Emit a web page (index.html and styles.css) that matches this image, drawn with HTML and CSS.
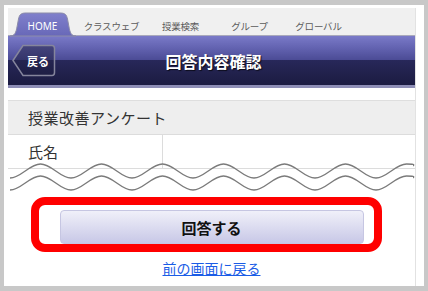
FILE: index.html
```html
<!DOCTYPE html>
<html lang="ja">
<head>
<meta charset="utf-8">
<title>回答内容確認</title>
<link rel="stylesheet" href="styles.css">
</head>
<body>
<div class="frame">
  <div class="content">
    <nav class="tabbar">
      <div class="tab tab-home">
        <svg class="tab-shape" width="66" height="25" viewBox="0 0 66 25">
          <defs>
            <linearGradient id="tg" x1="0" y1="0" x2="0" y2="1">
              <stop offset="0" stop-color="#8080cc"/>
              <stop offset="1" stop-color="#6868b8"/>
            </linearGradient>
          </defs>
          <path d="M0 24 C5 24 6 20 7 15 L8.5 7 C9.5 2.5 11 1 16 1 L50 1 C55 1 56.5 2.5 57.5 7 L59 15 C60 20 61 24 66 24 Z" fill="url(#tg)" stroke="#8c8ca8" stroke-width="1"/>
        </svg>
        <span class="tab-label">HOME</span>
      </div>
      <div class="tab"><span class="tab-label">クラスウェブ</span></div>
      <div class="tab"><span class="tab-label">授業検索</span></div>
      <div class="tab"><span class="tab-label">グループ</span></div>
      <div class="tab"><span class="tab-label">グローバル</span></div>
    </nav>
    <header class="header">
      <div class="back">
        <svg class="back-shape" width="44" height="33" viewBox="0 0 44 33">
          <defs>
            <linearGradient id="bg" x1="0" y1="0" x2="0" y2="1">
              <stop offset="0" stop-color="#44447c"/>
              <stop offset="0.48" stop-color="#34346a"/>
              <stop offset="0.5" stop-color="#242450"/>
              <stop offset="1" stop-color="#1e1e44"/>
            </linearGradient>
          </defs>
          <path d="M1 16.5 L11 1.5 L40 1.5 Q42.5 1.5 42.5 4.5 L42.5 28.5 Q42.5 31.5 40 31.5 L11 31.5 Z" fill="url(#bg)" stroke="#85859c" stroke-width="1.5"/>
        </svg>
        <span class="back-label">戻る</span>
      </div>
      <h1 class="title">回答内容確認</h1>
      <div></div>
    </header>
    <main class="main">
      <div class="table">
        <div class="row row-head">授業改善アンケート</div>
        <div class="row row-body">
          <div class="cell cell-label">氏名</div>
          <div class="cell"></div>
        </div>
        <svg class="waves" width="407" height="32" viewBox="0 0 407 32">
          <path id="wv" d="M2 17 C13 17 21.5 3 32.5 3 S52 17 63 17 S82.5 3 93.5 3 S113 17 124 17 S143.5 3 154.5 3 S174 17 185 17 S204.5 3 215.5 3 S235 17 246 17 S265.5 3 276.5 3 S296 17 307 17 S326.5 3 337.5 3 S357 17 368 17 S387.5 3 398.5 3 S404 4 406 5" fill="none" stroke="#7a7a7a" stroke-width="1.3"/>
          <use href="#wv" transform="translate(0 12)"/>
        </svg>
      </div>
      <div class="actions">
        <div class="btn-wrap">
          <button class="btn" type="button">回答する</button>
          <div class="highlight"></div>
        </div>
        <a class="link" href="#">前の画面に戻る</a>
      </div>
    </main>
  </div>
</div>
</body>
</html>
```
FILE: styles.css
```css
* { box-sizing: border-box; }

body {
  margin: 0;
  background: #c8c8c8;
  font-family: "Noto Sans CJK JP", "Noto Sans", sans-serif;
}

.frame {
  margin: 5px 4px 0 4px;
  width: 420px;
  height: 281px;
  background: #fff;
  padding: 3px 8px 0 4px;
}

.content {
  height: 100%;
  border-right: 1px solid #e2e2e2;
}

/* tabs */
.tabbar {
  display: flex;
  height: 28px;
  background: #f0f0f0;
  border-bottom: 1px solid #a9a9bb;
}

.tab {
  position: relative;
  width: 69px;
  height: 27px;
  padding-top: 11px;
  text-align: center;
  font-size: 9.5px;
  line-height: 14px;
  color: #5a5a5a;
  letter-spacing: -0.2px;
}

.tab-shape {
  position: absolute;
  left: 2px;
  top: 4px;
}

.tab-label {
  position: relative;
}

.tab-home {
  font-family: "Noto Sans", sans-serif;
  font-size: 10px;
  color: #fff;
  letter-spacing: 0;
}

/* header */
.header {
  display: grid;
  grid-template-columns: 1fr auto 1fr;
  align-items: center;
  height: 52px;
  padding-left: 4px;
  background: linear-gradient(#7a7ac8 0, #6262b0 25%, #4c4c96 48%, #28285a 49%, #20204a 80%, #1c1c42 100%);
  border-bottom: 3px solid #8e8eb6;
}

.back {
  position: relative;
  width: 44px;
  height: 33px;
  display: flex;
  align-items: center;
  justify-content: center;
  padding-left: 8px;
}

.back-shape {
  position: absolute;
  left: 0;
  top: 0;
}

.back-label {
  position: relative;
  color: #fff;
  font-weight: bold;
  font-size: 11px;
  line-height: 14px;
}

.title {
  margin: 0;
  color: #fff;
  font-size: 16px;
  font-weight: bold;
  line-height: 20px;
  text-shadow: 1px 1px 1px rgba(0, 0, 0, 0.7);
}

/* main */
.main {
  padding-top: 12px;
}

.table {
  position: relative;
  border-top: 1px solid #dedede;
}

.row {
  height: 34px;
  border-bottom: 1px solid #dcdcdc;
}

.row-head {
  background: #eeeeee;
  padding-left: 20px;
  font-size: 15px;
  line-height: 33px;
  color: #333;
  letter-spacing: 0.5px;
}

.row-body {
  display: flex;
}

.cell {
  flex: 1;
  font-size: 15px;
  line-height: 33px;
  color: #333;
}

.cell-label {
  flex: 0 0 155px;
  padding-left: 20px;
  border-right: 1px solid #dcdcdc;
}

.waves {
  position: absolute;
  left: 0;
  top: 60px;
}

.actions {
  margin-top: 41px;
  display: flex;
  flex-direction: column;
  align-items: center;
}

.btn-wrap {
  position: relative;
}

.btn {
  display: block;
  width: 304px;
  height: 34px;
  border: 1px solid #c6c6e2;
  border-radius: 4px;
  background: linear-gradient(#f0f0f9, #c8c8e7);
  font-family: "Noto Sans CJK JP", sans-serif;
  font-weight: bold;
  font-size: 15px;
  color: #111;
  padding: 0;
}

.highlight {
  position: absolute;
  left: -29px;
  top: -13px;
  width: 351px;
  height: 55px;
  border: 8px solid #ff0000;
  border-radius: 14px;
}

.link {
  margin-top: 16px;
  font-size: 14px;
  line-height: 16px;
  color: #1a5ce6;
  text-decoration: underline;
}
```
